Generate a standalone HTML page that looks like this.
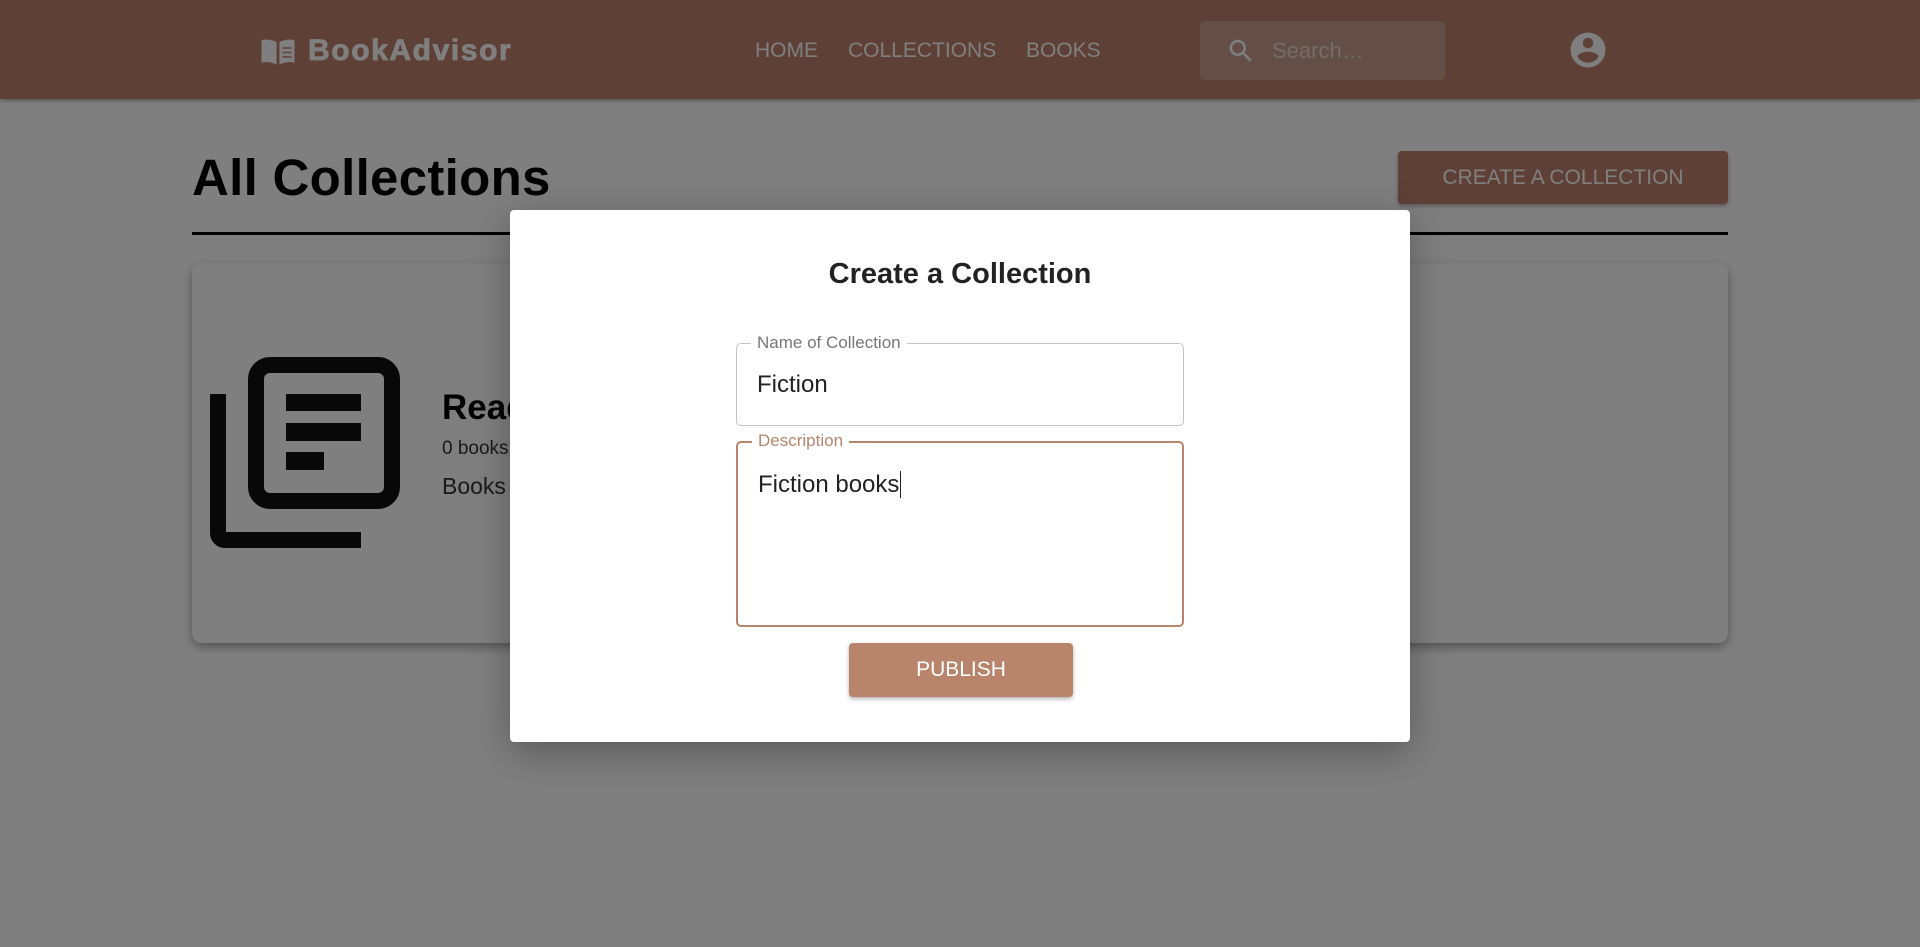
<!DOCTYPE html>
<html><head><meta charset="utf-8"><style>
*{box-sizing:border-box;margin:0;padding:0}
body{width:1920px;height:947px;overflow:hidden;background:#fff;font-family:"Liberation Sans",Arial,sans-serif;position:relative}
.hdr{position:absolute;left:0;top:0;width:1920px;height:99px;background:#bc806e;box-shadow:0 2px 4px rgba(0,0,0,.3)}
.logo{position:absolute;left:260px;top:34px;display:flex;align-items:center;color:#fff;font-weight:bold;font-size:30px;letter-spacing:1.6px;-webkit-text-stroke:0.8px #fff}
.nav{position:absolute;top:39px;color:#fff;font-size:21px}
.search{position:absolute;left:1200px;top:21px;width:245px;height:59px;background:#c99e90;border-radius:5px}
.search span{position:absolute;left:72px;top:17px;color:#e8d8d2;font-size:22px}
h1{position:absolute;left:192px;top:148px;font-size:51px;font-weight:bold;color:#000;letter-spacing:0.3px}
.cbtn{position:absolute;left:1398px;top:151px;width:330px;height:53px;background:#bc806e;border-radius:4px;color:#fff;font-size:21px;display:flex;align-items:center;justify-content:center;box-shadow:0 2px 4px rgba(0,0,0,.3)}
.line{position:absolute;left:192px;top:232px;width:1536px;height:3px;background:#000}
.card{position:absolute;left:192px;top:263px;width:1536px;height:380px;background:#fff;border-radius:10px;box-shadow:0 4px 10px rgba(0,0,0,.35)}
.ov{position:absolute;left:0;top:0;width:1920px;height:947px;background:rgba(0,0,0,.5)}
.modal{position:absolute;left:510px;top:210px;width:900px;height:532px;background:#fff;border-radius:4px;box-shadow:0 10px 40px rgba(0,0,0,.3)}
.mt{position:absolute;left:0;width:100%;top:48px;text-align:center;font-size:29px;font-weight:bold;color:#222}
.f{position:absolute;left:226px;width:448px;border:1px solid #c4c4c4;border-radius:5px}
.f label{position:absolute;left:14px;top:-11px;background:#fff;padding:0 6px;font-size:17px;color:#777}
.f div{position:absolute;left:20px;font-size:24px;color:#222}
.pub{position:absolute;left:339px;top:433px;width:224px;height:54px;background:#b8846c;border-radius:4px;color:#fff;font-size:21px;display:flex;align-items:center;justify-content:center;box-shadow:0 2px 4px rgba(0,0,0,.3)}
</style></head><body>
<div class="hdr">
<div class="logo"><svg width="36" height="30" viewBox="0 0 24 20"><path fill="#fff" d="M1 3c2-1 6-1 10 1v15c-4-2-8-2-10-1zM13 4c4-2 8-2 10-1v15c-2-1-6-1-10 1z"/><path stroke="#bc806e" stroke-width="1" d="M15 8h6M15 11h6M15 14h6"/></svg><span style="margin-left:12px">BookAdvisor</span></div>
<div class="nav" style="left:755px">HOME</div>
<div class="nav" style="left:848px">COLLECTIONS</div>
<div class="nav" style="left:1026px">BOOKS</div>
<div class="search"><svg style="position:absolute;left:26px;top:15px" width="30" height="30" viewBox="0 0 24 24"><path fill="#fff" d="M15.5 14h-.8l-.3-.3A6.5 6.5 0 1 0 9.5 16c1.6 0 3.1-.6 4.2-1.6l.3.3v.8l5 5 1.5-1.5zm-6 0C7 14 5 12 5 9.5S7 5 9.5 5 14 7 14 9.5 12 14 9.5 14z"/></svg><span>Search…</span></div>
<svg style="position:absolute;left:1567px;top:29px" width="42" height="42" viewBox="0 0 24 24"><path fill="#fff" d="M12 2a10 10 0 1 0 0 20 10 10 0 0 0 0-20zm0 3a3 3 0 1 1 0 6 3 3 0 0 1 0-6zm0 14.2c-2.5 0-4.7-1.3-6-3.2 0-2 4-3.1 6-3.1s6 1.1 6 3.1c-1.3 1.9-3.5 3.2-6 3.2z"/></svg>
</div>
<h1>All Collections</h1>
<div class="cbtn">CREATE A COLLECTION</div>
<div class="line"></div>
<div class="card">
<svg style="position:absolute;left:0;top:0" width="260" height="320">
<rect x="64" y="102" width="136" height="136" rx="14" fill="none" stroke="#111" stroke-width="16"/>
<path d="M26 131 V270 a7 7 0 0 0 7 7 H169" fill="none" stroke="#111" stroke-width="16"/>
<rect x="94" y="131" width="75" height="17" fill="#111"/>
<rect x="94" y="160" width="75" height="18" fill="#111"/>
<rect x="94" y="189" width="38" height="18" fill="#111"/>
</svg>
<div style="position:absolute;left:250px;top:125px;font-size:35px;font-weight:bold">Reading List</div>
<div style="position:absolute;left:250px;top:175px;font-size:19px;color:#333">0 books</div>
<div style="position:absolute;left:250px;top:210px;font-size:23px;color:#333">Books to read</div>
</div>
<div class="ov"></div>
<div class="modal">
<div class="mt">Create a Collection</div>
<div class="f" style="top:133px;height:83px"><label>Name of Collection</label><div style="top:27px">Fiction</div></div>
<div class="f" style="top:231px;height:186px;border:2px solid #b8846c"><label style="color:#b8846c;top:-12px">Description</label><div style="top:28px">Fiction books<span style="border-left:1.5px solid #222;margin-left:1px"></span></div></div>
<div class="pub">PUBLISH</div>
</div>
</body></html>
